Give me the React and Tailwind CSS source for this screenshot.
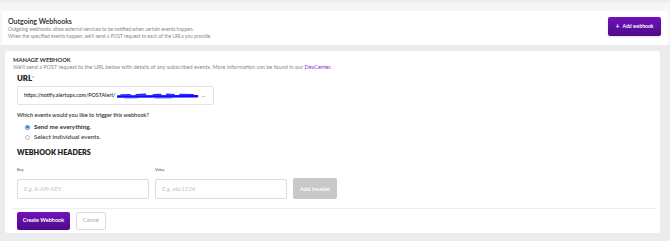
import React, { useState } from 'react';

const Scribble = () => (
    <svg width="82" height="7" viewBox="0 0 86 7" preserveAspectRatio="none" className="shrink-0">
        <path d="M1 4.5 L84 4.2" stroke="#0a0aff" strokeWidth="2.6" fill="none" strokeLinecap="round" />
        <path d="M4 3 L14 2.6 M20 2.8 L30 2.2 M38 2.6 L46 2.4 M52 2.2 L60 2.8 M66 2.5 L80 2.6" stroke="#2a2aff" strokeWidth="1.4" fill="none" strokeLinecap="round" />
        <path d="M8 6 L22 5.8 M40 6 L58 5.9" stroke="#3a3aff" strokeWidth="0.8" fill="none" />
    </svg>
);

const App = () => {
    const [mode, setMode] = useState('all');

    return (
        <div className="w-[670px] h-[241px] overflow-hidden bg-[#ececec] font-['Lato',sans-serif] text-[#222]">
            <div className="h-[3px] bg-[#eeeeee]" />
            <div className="bg-[#f6f6f6] pt-[8px] px-[2px]">
                <div className="h-[34px] bg-white flex justify-between pl-[6px] pr-[7px]">
                    <div className="pt-[6px]">
                        <h1 className="text-[7px] leading-[9px] font-semibold text-[#222]">Outgoing Webhooks</h1>
                        <p className="text-[4.9px] leading-[7px] text-[#888]">Outgoing webhooks allow external services to be notified when certain events happen.</p>
                        <p className="text-[4.9px] leading-[7px] text-[#888]">When the specified events happen, we'll send a POST request to each of the URLs you provide.</p>
                    </div>
                    <button className="mt-[6px] h-[19px] w-[53px] rounded-[2px] bg-linear-to-b from-[#7212bd] to-[#4c0a8a] text-white text-[5px] font-bold flex items-center justify-center gap-[3px] shadow-sm">
                        <span className="text-[7px] leading-none font-bold">+</span>
                        Add webhook
                    </button>
                </div>
            </div>

            <div className="ml-[5px] mt-[6px] w-[655px] h-[182px] bg-white rounded-[3px] px-[8px] pt-[5px]">
                <h2 className="text-[5.8px] leading-[7px] font-bold text-[#333] uppercase">Manage Webhook</h2>
                <p className="text-[5.5px] leading-[8px] text-[#888] whitespace-nowrap">
                    We'll send a POST request to the URL below with details of any subscribed events. More information can be found in our{' '}
                    <span className="text-[#8a2be2]">DevCenter.</span>
                </p>

                <div className="pl-[4px]">
                    <div className="mt-[3px] text-[7.8px] leading-[8px] font-extrabold text-[#222]">
                        URL<span className="text-[#f0a030] text-[5px] align-top">*</span>
                    </div>
                    <div className="mt-[4px] w-[197px] h-[19px] border border-[#e4e4e4] rounded-[2px] flex items-center pl-[6px] gap-[1px] overflow-hidden">
                        <span className="text-[5.3px] font-semibold text-[#333] whitespace-nowrap">https://notify.alertops.com/POSTAlert/</span>
                        <Scribble />
                        <span className="text-[5px] text-[#666] ml-[2px]">...</span>
                    </div>

                    <p className="mt-[6px] text-[5.6px] leading-[8px] font-semibold text-[#333]">Which events would you like to trigger this webhook?</p>
                    <label className="mt-[4px] pl-[8px] flex items-center gap-[4px] h-[8px]" onClick={() => setMode('all')}>
                        <span className={`w-[5px] h-[5px] rounded-full flex items-center justify-center border ${mode === 'all' ? 'border-[#4a90e2] bg-[#cfe2fa]' : 'border-[#bbb] bg-white'}`}>
                            {mode === 'all' && <span className="w-[2.5px] h-[2.5px] rounded-full bg-[#2f7de1]" />}
                        </span>
                        <span className="text-[6.3px] font-bold text-[#333]">Send me everything.</span>
                    </label>
                    <label className="mt-[2px] pl-[8px] flex items-center gap-[4px] h-[8px]" onClick={() => setMode('some')}>
                        <span className={`w-[5px] h-[5px] rounded-full flex items-center justify-center border ${mode === 'some' ? 'border-[#4a90e2] bg-[#cfe2fa]' : 'border-[#bbb] bg-white'}`}>
                            {mode === 'some' && <span className="w-[2.5px] h-[2.5px] rounded-full bg-[#2f7de1]" />}
                        </span>
                        <span className="text-[6.3px] font-semibold text-[#444]">Select individual events.</span>
                    </label>

                    <h3 className="mt-[8px] text-[7.2px] leading-[8px] font-extrabold text-[#222] uppercase">Webhook Headers</h3>

                    <div className="mt-[10px] flex items-end gap-[6px]">
                        <div>
                            <div className="text-[4px] leading-[6px] text-[#444]">Key</div>
                            <input className="mt-[1px] w-[132px] h-[20px] border border-[#dddddd] rounded-[2px] px-[6px] text-[6px] italic placeholder-[#c4c4c4] outline-none" placeholder="E.g. X-API-KEY" />
                        </div>
                        <div>
                            <div className="text-[4px] leading-[6px] text-[#444]">Value</div>
                            <input className="mt-[1px] w-[132px] h-[20px] border border-[#dddddd] rounded-[2px] px-[6px] text-[6px] italic placeholder-[#c4c4c4] outline-none" placeholder="E.g. abc1234" />
                        </div>
                        <button className="w-[44px] h-[21px] bg-[#c8c8c8] rounded-[2px] text-white text-[6px] font-semibold">Add header</button>
                    </div>
                </div>

                <div className="mt-[9px] w-[644px] h-px bg-[#eeeeee]" />

                <div className="mt-[3px] pl-[4px] flex gap-[6px]">
                    <button className="w-[53px] h-[18px] rounded-[2px] bg-linear-to-b from-[#7212bd] to-[#4c0a8a] text-white text-[5.5px] font-bold">Create Webhook</button>
                    <button className="w-[30px] h-[18px] rounded-[2px] border border-[#dcdcdc] bg-white text-[#aaa] text-[5.5px]">Cancel</button>
                </div>
            </div>
        </div>
    );
};

export default App;
